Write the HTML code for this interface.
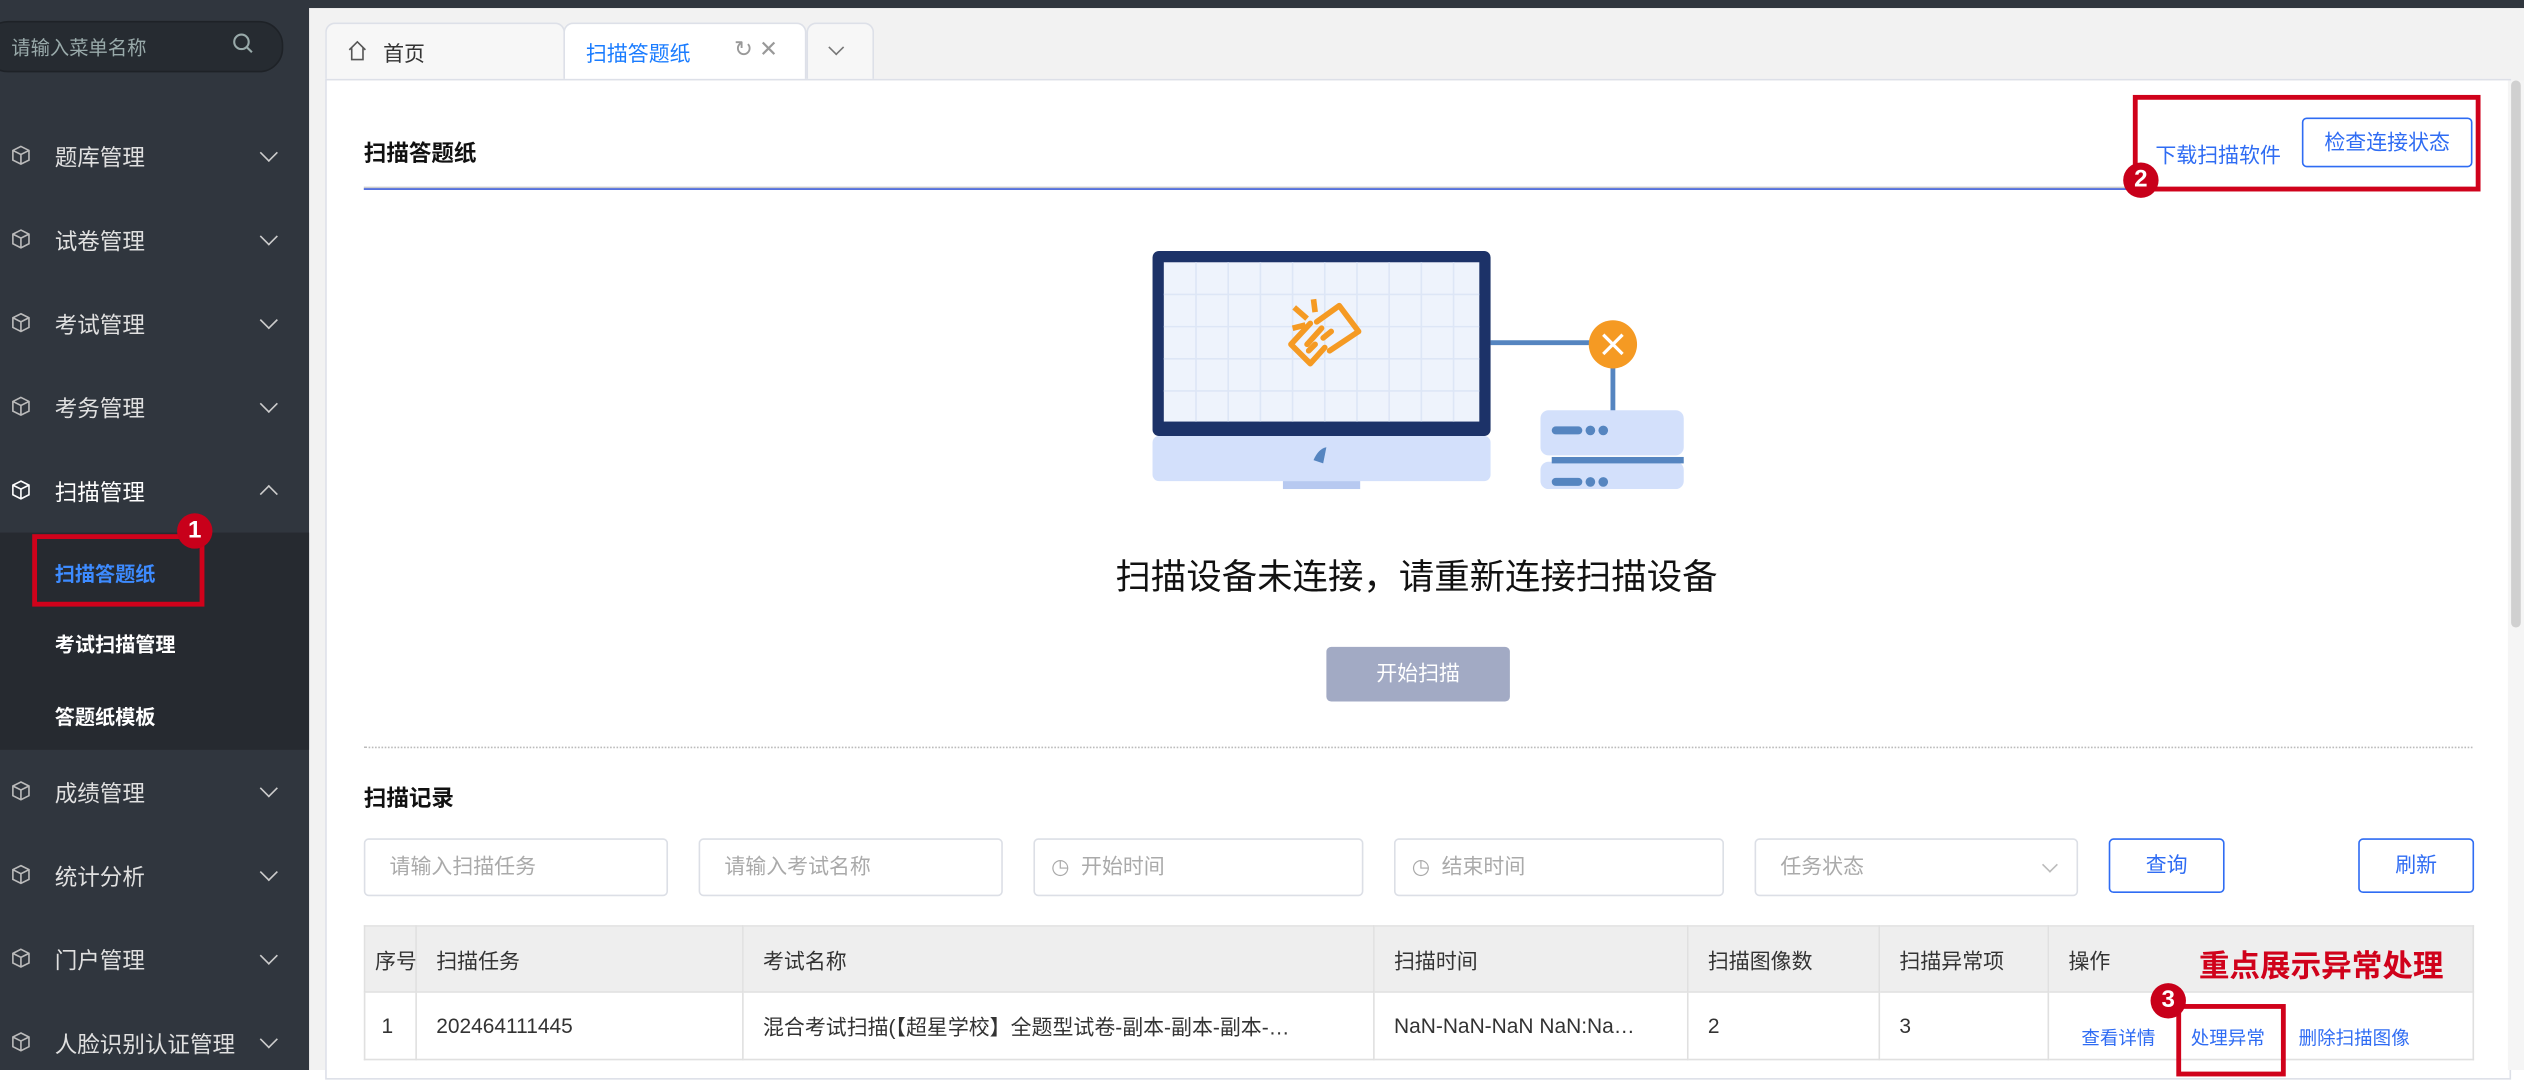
<!DOCTYPE html>
<html><head><meta charset="utf-8"><style>
html,body{margin:0;padding:0;width:2524px;height:1070px;overflow:hidden;background:#fff}
#w{position:absolute;left:0;top:0;width:1568px;height:665px;transform:scale(1.60969,1.60902);transform-origin:0 0;font-family:"Liberation Sans","Noto Sans CJK SC",sans-serif;font-size:13px;color:#333;background:#f2f2f2}
.a{position:absolute}
.side{left:0;top:0;width:192px;height:665px;background:#30363e}
.mi{position:absolute;left:0;width:192px;height:52px;color:#e0e0e0;font-size:14px}
.mi .ic{position:absolute;left:7px;top:19px;width:12px;height:13px}
.mi .t{position:absolute;left:34px;top:17px}
.mi .ch{position:absolute;left:163px;top:20px;width:7px;height:7px;border-right:1.3px solid #ccc;border-bottom:1.3px solid #ccc;transform:rotate(45deg)}
.sub{position:absolute;left:34px;color:#fff;font-size:12.5px;font-weight:bold}
.red{position:absolute;border:3.5px solid #d0021b;box-sizing:border-box}
.badge{position:absolute;width:22px;height:22px;border-radius:50%;background:#c8001a;color:#fff;font-weight:bold;font-size:15px;text-align:center;line-height:22px}
.inp{position:absolute;height:36px;border:1px solid #dcdfe6;border-radius:3px;box-sizing:border-box;color:#aaa;font-size:13px;line-height:34px;background:#fff}
.btn{position:absolute;height:34px;border:1px solid #2f6cf3;border-radius:3px;box-sizing:border-box;color:#2f6cf3;text-align:center;line-height:32px;background:#fff}
table{table-layout:fixed}
td{border:1px solid #e0e0e0;padding:0 0 0 12px;height:40px;font-size:13px;white-space:nowrap;overflow:hidden}
</style></head><body><div id="w">
<div class="a" style="left:0;top:0;width:1568px;height:5px;background:#30363e"></div>
<div class="a side"></div>
<div class="a" style="left:-10px;top:13px;width:184px;height:30px;border-radius:15px;background:#262b31;border:1px solid #1e2227"></div>
<div class="a" style="left:7px;top:21px;color:#9aa;font-size:12px">请输入菜单名称</div>
<svg class="a" style="left:144px;top:20px" width="14" height="14" viewBox="0 0 14 14"><circle cx="6" cy="6" r="4.5" fill="none" stroke="#9aa" stroke-width="1.3"/><path d="M9.5 9.5L12.5 12.5" stroke="#9aa" stroke-width="1.3"/></svg>
<div class="mi" style="top:71px"><svg class="ic" viewBox="0 0 12 13"><path d="M6 1L11 3.5V9.5L6 12L1 9.5V3.5Z M1 3.5L6 6L11 3.5M6 6V12" fill="none" stroke="#bbb"/></svg><span class="t">题库管理</span><span class="ch"></span></div>
<div class="mi" style="top:123px"><svg class="ic" viewBox="0 0 12 13"><path d="M6 1L11 3.5V9.5L6 12L1 9.5V3.5Z M1 3.5L6 6L11 3.5M6 6V12" fill="none" stroke="#bbb"/></svg><span class="t">试卷管理</span><span class="ch"></span></div>
<div class="mi" style="top:175px"><svg class="ic" viewBox="0 0 12 13"><path d="M6 1L11 3.5V9.5L6 12L1 9.5V3.5Z M1 3.5L6 6L11 3.5M6 6V12" fill="none" stroke="#bbb"/></svg><span class="t">考试管理</span><span class="ch"></span></div>
<div class="mi" style="top:227px"><svg class="ic" viewBox="0 0 12 13"><path d="M6 1L11 3.5V9.5L6 12L1 9.5V3.5Z M1 3.5L6 6L11 3.5M6 6V12" fill="none" stroke="#bbb"/></svg><span class="t">考务管理</span><span class="ch"></span></div>
<div class="mi" style="top:279px;color:#fff"><svg class="ic" viewBox="0 0 12 13"><path d="M6 1L11 3.5V9.5L6 12L1 9.5V3.5Z M1 3.5L6 6L11 3.5M6 6V12" fill="none" stroke="#fff"/></svg><span class="t">扫描管理</span><span class="ch" style="transform:rotate(225deg);top:24px"></span></div>
<div class="a" style="left:0;top:331px;width:192px;height:135px;background:#262a30"></div>
<div class="sub" style="top:346px;color:#3d8bff">扫描答题纸</div>
<div class="sub" style="top:390px">考试扫描管理</div>
<div class="sub" style="top:435px">答题纸模板</div>
<div class="red" style="left:20px;top:332px;width:107px;height:45px"></div>
<div class="badge" style="left:110px;top:319px">1</div>
<div class="mi" style="top:466px"><svg class="ic" viewBox="0 0 12 13"><path d="M6 1L11 3.5V9.5L6 12L1 9.5V3.5Z M1 3.5L6 6L11 3.5M6 6V12" fill="none" stroke="#bbb"/></svg><span class="t">成绩管理</span><span class="ch"></span></div>
<div class="mi" style="top:518px"><svg class="ic" viewBox="0 0 12 13"><path d="M6 1L11 3.5V9.5L6 12L1 9.5V3.5Z M1 3.5L6 6L11 3.5M6 6V12" fill="none" stroke="#bbb"/></svg><span class="t">统计分析</span><span class="ch"></span></div>
<div class="mi" style="top:570px"><svg class="ic" viewBox="0 0 12 13"><path d="M6 1L11 3.5V9.5L6 12L1 9.5V3.5Z M1 3.5L6 6L11 3.5M6 6V12" fill="none" stroke="#bbb"/></svg><span class="t">门户管理</span><span class="ch"></span></div>
<div class="mi" style="top:622px"><svg class="ic" viewBox="0 0 12 13"><path d="M6 1L11 3.5V9.5L6 12L1 9.5V3.5Z M1 3.5L6 6L11 3.5M6 6V12" fill="none" stroke="#bbb"/></svg><span class="t">人脸识别认证管理</span><span class="ch"></span></div>

<div class="a" style="left:202px;top:14px;width:147px;height:35px;background:#f7f7f7;border:1px solid #dde0e8;border-bottom:none;border-radius:6px 6px 0 0"></div>
<svg class="a" style="left:216px;top:25px" width="12" height="13" viewBox="0 0 12 13"><path d="M1 6L6 1L11 6M2.5 5V12H9.5V5" fill="none" stroke="#555" stroke-width="1"/></svg>
<div class="a" style="left:238px;top:23px;font-size:13px;color:#333">首页</div>
<div class="a" style="left:350px;top:14px;width:149px;height:37px;background:#fff;border:1px solid #dde0e8;border-bottom:none;border-radius:6px 6px 0 0"></div>
<div class="a" style="left:364px;top:23px;color:#1a7cff">扫描答题纸</div>
<div class="a" style="left:456px;top:22px;color:#999;font-size:14px">↻ ✕</div>
<div class="a" style="left:501px;top:14px;width:40px;height:35px;background:#f7f7f7;border:1px solid #dde0e8;border-bottom:none;border-radius:6px 6px 0 0"></div>
<div class="a" style="left:516px;top:26px;width:6px;height:6px;border-right:1.3px solid #777;border-bottom:1.3px solid #777;transform:rotate(45deg)"></div>
<div class="a" style="left:202px;top:49px;width:1356px;height:620px;background:#fff;border:1px solid #dde0e8"></div>
<div class="a" style="left:1558px;top:50px;width:10px;height:615px;background:#f5f5f5"></div>
<div class="a" style="left:1560px;top:50px;width:6px;height:340px;background:#d0d0d0;border-radius:3px"></div>

<div class="a" style="left:226px;top:85px;font-size:14px;font-weight:bold;color:#111">扫描答题纸</div>
<div class="a" style="left:226px;top:116px;width:1310px;height:1px;background:#ccc"></div>
<div class="a" style="left:226px;top:117px;width:1310px;height:1px;background:#3a5bd9"></div>
<div class="a" style="left:1339px;top:86px;color:#2f6cf3">下载扫描软件</div>
<div class="btn" style="left:1430px;top:73px;width:106px;height:31px;line-height:29px">检查连接状态</div>
<div class="red" style="left:1325px;top:59px;width:216px;height:60px"></div>
<div class="badge" style="left:1319px;top:101px">2</div>

<svg class="a" style="left:714px;top:154px" width="334" height="150" viewBox="0 0 334 150">
<rect x="2" y="2" width="210" height="115" rx="4" fill="#1c3268"/>
<rect x="9" y="9" width="196" height="99" fill="#eef3fc"/>
<g stroke="#dde6f6" stroke-width="1">
<path d="M29 9V108M49 9V108M69 9V108M89 9V108M109 9V108M129 9V108M149 9V108M169 9V108M189 9V108M9 29H205M9 49H205M9 69H205M9 89H205"/></g>
<rect x="2" y="117" width="210" height="28" rx="4" fill="#d3e0fb"/>
<path d="M102 132 Q105 125 110 124 L108 134Z" fill="#5585c0"/>
<rect x="83" y="145" width="48" height="5" fill="#b7c9f0"/>
<path d="M107 50l-9 10" stroke="#f59a23" stroke-width="3.5" stroke-linecap="round"/>
<path d="M100 47l-12 13 12 12 9-10" fill="none" stroke="#f59a23" stroke-width="3.5" stroke-linejoin="round" stroke-linecap="round"/>
<path d="M104 46l14-10 12 16-18 12" fill="none" stroke="#f59a23" stroke-width="3.5" stroke-linejoin="round" stroke-linecap="round"/>
<path d="M113 52l-5 4M103 60l-4 4" stroke="#f59a23" stroke-width="3.5" stroke-linecap="round"/>
<path d="M90 37l8 7M102 32l1 8M89 50l8-2" stroke="#f59a23" stroke-width="3.5"/>
<path d="M212 59H285M288 72V104" stroke="#5585c0" stroke-width="3"/>
<circle cx="288" cy="60" r="15" fill="#f59a23"/>
<path d="M282 54l12 12M294 54l-12 12" stroke="#fff" stroke-width="2"/>
<rect x="243" y="101" width="89" height="28" rx="5" fill="#d3e0fb"/>
<rect x="243" y="133" width="89" height="17" rx="5" fill="#d3e0fb"/>
<rect x="250" y="130" width="82" height="4" fill="#5585c0"/>
<rect x="250" y="111" width="19" height="5" rx="2.5" fill="#5585c0"/><circle cx="274" cy="113.5" r="3" fill="#5585c0"/><circle cx="282" cy="113.5" r="3" fill="#5585c0"/>
<rect x="250" y="143" width="19" height="5" rx="2.5" fill="#5585c0"/><circle cx="274" cy="145.5" r="3" fill="#5585c0"/><circle cx="282" cy="145.5" r="3" fill="#5585c0"/>
</svg>
<div class="a" style="left:670px;top:341px;font-size:22px;color:#111;width:420px;text-align:center">扫描设备未连接，请重新连接扫描设备</div>
<div class="a" style="left:824px;top:402px;width:114px;height:34px;background:#a2aac4;color:#fff;border-radius:3px;text-align:center;line-height:34px">开始扫描</div>
<div class="a" style="left:226px;top:464px;width:1310px;border-top:1px dotted #bbb"></div>
<div class="a" style="left:226px;top:486px;font-size:14px;font-weight:bold;color:#111">扫描记录</div>

<div class="inp" style="left:226px;top:521px;width:189px;padding-left:15px">请输入扫描任务</div>
<div class="inp" style="left:434px;top:521px;width:189px;padding-left:15px">请输入考试名称</div>
<div class="inp" style="left:642px;top:521px;width:205px;padding-left:10px">◷ &nbsp;开始时间</div>
<div class="inp" style="left:866px;top:521px;width:205px;padding-left:10px">◷ &nbsp;结束时间</div>
<div class="inp" style="left:1090px;top:521px;width:201px;padding-left:15px">任务状态</div>
<div class="a" style="left:1270px;top:534px;width:6px;height:6px;border-right:1px solid #bbb;border-bottom:1px solid #bbb;transform:rotate(45deg)"></div>
<div class="btn" style="left:1310px;top:521px;width:72px">查询</div>
<div class="btn" style="left:1465px;top:521px;width:72px">刷新</div>

<table class="a" style="left:226px;top:575px;width:1311px;border-collapse:collapse">
<colgroup><col style="width:32px"><col style="width:203px"><col style="width:392px"><col style="width:195px"><col style="width:119px"><col style="width:105px"><col></colgroup>
<tr style="background:#eeeeee;color:#333"><td style="padding-left:6px;height:40px">序号</td><td>扫描任务</td><td>考试名称</td><td>扫描时间</td><td>扫描图像数</td><td>扫描异常项</td><td>操作</td></tr>
<tr><td style="padding-left:10px;height:41px">1</td><td>202464111445</td><td>混合考试扫描(【超星学校】全题型试卷-副本-副本-副本-…</td><td>NaN-NaN-NaN NaN:Na…</td><td>2</td><td>3</td><td></td></tr>
</table>
<div class="a" style="left:1293px;top:637px;font-size:11.5px;color:#2f6cf3">查看详情</div>
<div class="a" style="left:1361px;top:637px;font-size:11.5px;color:#2f6cf3">处理异常</div>
<div class="a" style="left:1428px;top:637px;font-size:11.5px;color:#2f6cf3">删除扫描图像</div>
<div class="a" style="left:1366px;top:586px;font-size:19px;font-weight:bold;color:#d0021b">重点展示异常处理</div>
<div class="red" style="left:1352px;top:624px;width:68px;height:45px"></div>
<div class="badge" style="left:1336px;top:611px">3</div>
</div></body></html>
